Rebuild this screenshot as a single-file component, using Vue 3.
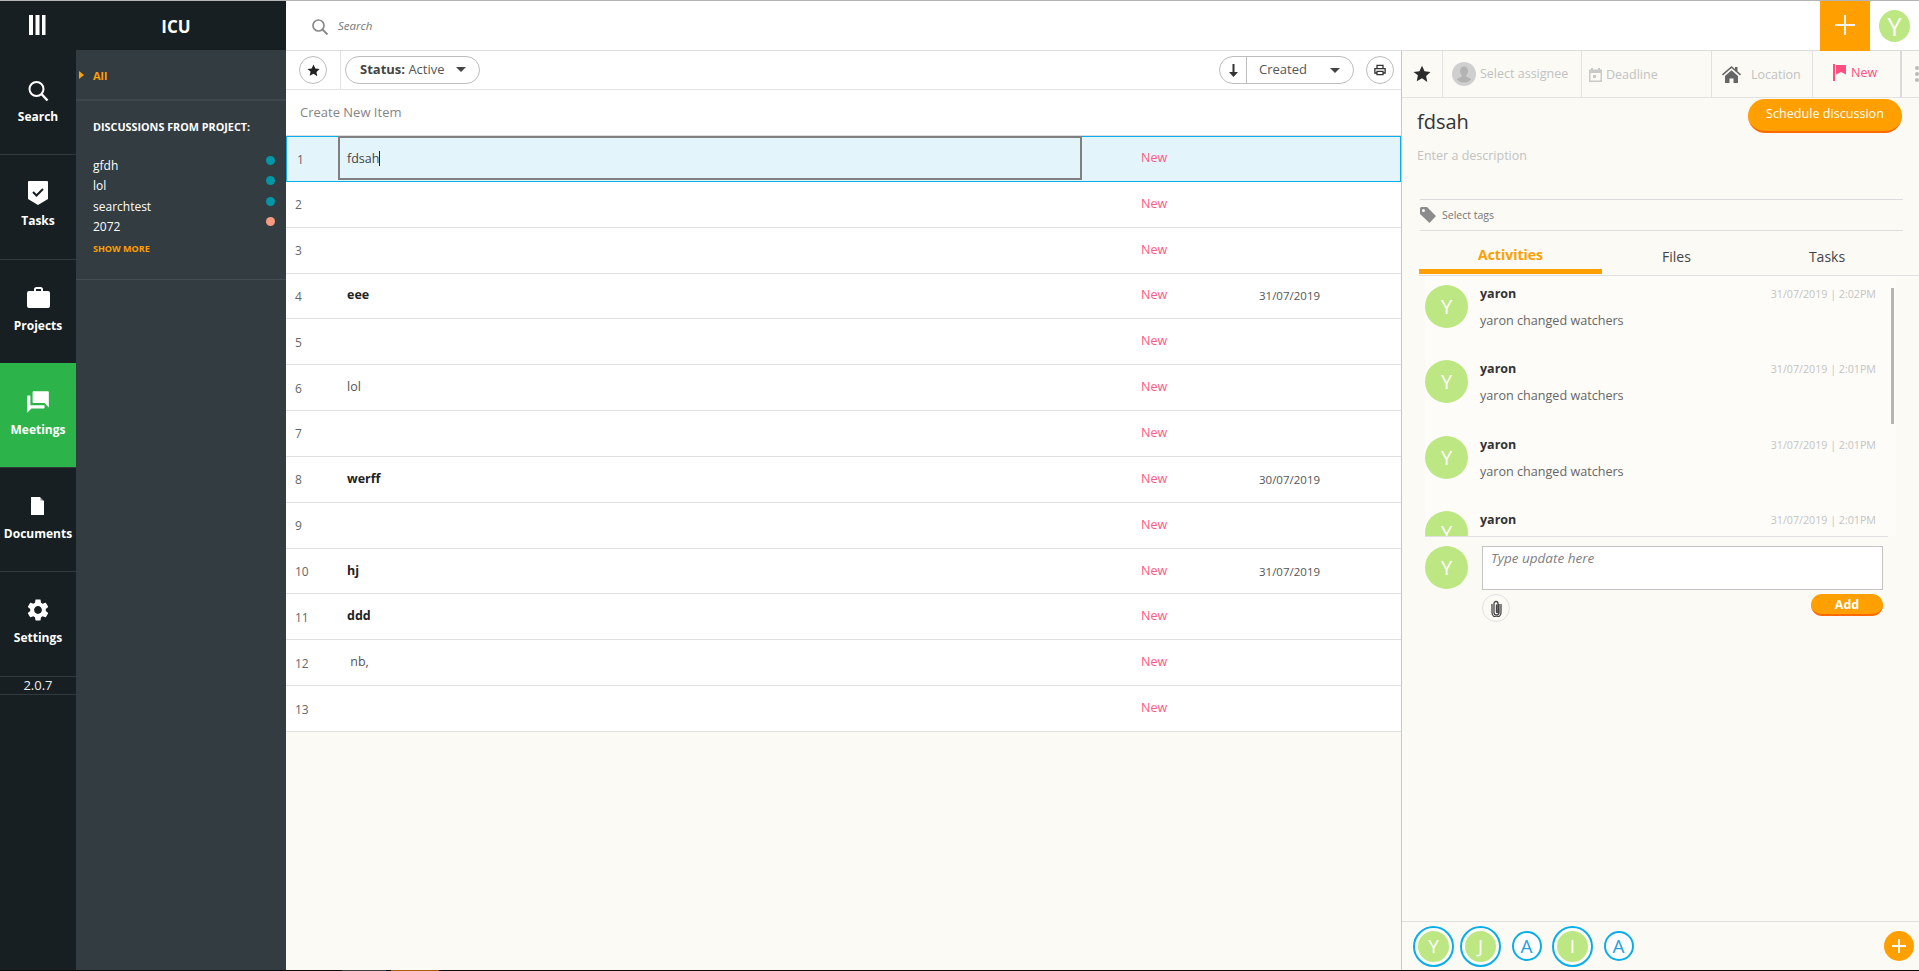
<script setup>
const nav = [
  { key: 'search', label: 'Search' },
  { key: 'tasks', label: 'Tasks' },
  { key: 'projects', label: 'Projects' },
  { key: 'meetings', label: 'Meetings', active: true },
  { key: 'documents', label: 'Documents' },
  { key: 'settings', label: 'Settings' }
]
const discussions = [
  { name: 'gfdh', tone: 'teal' },
  { name: 'lol', tone: 'teal' },
  { name: 'searchtest', tone: 'teal' },
  { name: '2072', tone: 'salmon' }
]
const rows = [
  { n: 1, selected: true },
  { n: 2 },
  { n: 3 },
  { n: 4, text: 'eee', bold: true, date: '31/07/2019' },
  { n: 5 },
  { n: 6, text: 'lol' },
  { n: 7 },
  { n: 8, text: 'werff', bold: true, date: '30/07/2019' },
  { n: 9 },
  { n: 10, text: 'hj', bold: true, date: '31/07/2019' },
  { n: 11, text: 'ddd', bold: true },
  { n: 12, text: '\u00a0nb,' },
  { n: 13 }
]
const activities = [
  { time: '2:02PM', msg: 'yaron changed watchers' },
  { time: '2:01PM', msg: 'yaron changed watchers' },
  { time: '2:01PM', msg: 'yaron changed watchers' },
  { time: '2:01PM' }
]
const watchers = [
  { l: 'Y', on: true }, { l: 'J', on: true }, { l: 'A' }, { l: 'I', on: true }, { l: 'A' }
]
</script>

<template>
  <div class="root">
    <div class="topline"></div>
    <div class="app">
      <aside class="side">
        <div class="brand">
          <div class="brand-icon">
            <svg width="18" height="20" viewBox="0 0 18 20"><path fill="#fff" d="M0 0h4v20H0zM6.500 0h4v20h-4zM13 0h3.500v20H13z"/></svg>
          </div>
          <div class="brand-name">ICU</div>
        </div>
        <div class="side-body">
          <nav class="nav">
            <div v-for="item in nav" :key="item.key" class="nav-item" :class="{ active: item.active }">
              <div class="nav-icon">
                <svg v-if="item.key === 'search'" width="22" height="24" viewBox="0 0 22 24"><circle cx="9.500" cy="10" r="7" fill="none" stroke="#fff" stroke-width="2"/><path d="M14.500 15l6 6.500" stroke="#fff" stroke-width="2.400"/></svg>
                <svg v-else-if="item.key === 'tasks'" width="20" height="24" viewBox="0 0 20 24"><path fill="#fff" d="M1 0h18a1 1 0 0 1 1 1v17l-10 6-10-6V1a1 1 0 0 1 1-1z"/><path d="M5 11l3.500 3.500L15 8" fill="none" stroke="#171f22" stroke-width="2"/></svg>
                <svg v-else-if="item.key === 'projects'" width="23" height="21" viewBox="0 0 23 21"><path fill="#fff" d="M7 4V2.500A2.500 2.500 0 0 1 9.500 0h4A2.500 2.500 0 0 1 16 2.500V4h5a2 2 0 0 1 2 2v13a2 2 0 0 1-2 2H2a2 2 0 0 1-2-2V6a2 2 0 0 1 2-2zm2 0h5V2H9z"/></svg>
                <svg v-else-if="item.key === 'meetings'" width="26" height="26" viewBox="0 0 24 24"><g transform="translate(24 0) scale(-1 1)"><path fill="#fff" d="M21 6h-2v9H6v2c0 .55.45 1 1 1h11l4 4V7c0-.55-.45-1-1-1zm-4 6V3c0-.55-.45-1-1-1H3c-.55 0-1 .45-1 1v14l4-4h10c.55 0 1-.45 1-1z"/></g></svg>
                <svg v-else-if="item.key === 'documents'" width="14" height="18" viewBox="0 0 14 18"><path fill="#fff" d="M0 0h9l4 4v14H0z"/><path fill="#171f22" d="M9.500 0v3.500H13z" opacity=".5"/></svg>
                <svg v-else width="26" height="26" viewBox="0 0 24 24"><path fill="#fff" d="M19.140 12.940c.04-.3.06-.61.06-.94 0-.32-.02-.64-.07-.94l2.030-1.580c.18-.14.23-.41.12-.61l-1.920-3.320c-.12-.22-.37-.29-.59-.22l-2.390.96c-.5-.38-1.030-.7-1.620-.94l-.36-2.540c-.04-.24-.24-.41-.48-.41h-3.840c-.24 0-.43.17-.47.41l-.36 2.540c-.59.24-1.130.57-1.620.94l-2.390-.96c-.22-.08-.47 0-.59.22L2.740 8.870c-.12.21-.08.47.12.61l2.030 1.580c-.05.3-.09.63-.09.94s.02.64.07.94l-2.030 1.580c-.18.14-.23.41-.12.61l1.920 3.320c.12.22.37.29.59.22l2.390-.96c.5.38 1.030.7 1.620.94l.36 2.540c.05.24.24.41.48.41h3.840c.24 0 .44-.17.47-.41l.36-2.540c.59-.24 1.130-.56 1.620-.94l2.390.96c.22.08.47 0 .59-.22l1.920-3.320c.12-.22.07-.47-.12-.61l-2.010-1.580zM12 15.600c-1.980 0-3.600-1.620-3.600-3.600s1.620-3.600 3.600-3.600 3.600 1.620 3.600 3.600-1.620 3.600-3.600 3.600z"/></svg>
              </div>
              <div class="nav-label">{{ item.label }}</div>
            </div>
            <div class="version">2.0.7</div>
          </nav>
          <div class="sec">
            <div class="sec-all"><span class="caret-right"></span><span>All</span></div>
            <div class="sec-group">
              <div class="sec-title">DISCUSSIONS FROM PROJECT:</div>
              <div v-for="d in discussions" :key="d.name" class="sec-row">
                <span>{{ d.name }}</span><i class="dot" :class="d.tone"></i>
              </div>
              <div class="show-more">SHOW MORE</div>
            </div>
          </div>
        </div>
      </aside>

      <div class="content">
        <header class="top">
          <svg class="top-search" width="18" height="18" viewBox="0 0 18 18"><circle cx="7.500" cy="7.500" r="5.500" fill="none" stroke="#8a8a8a" stroke-width="1.700"/><path d="M11.500 11.500l5 5" stroke="#8a8a8a" stroke-width="2"/></svg>
          <span class="top-text">Search</span>
          <div class="top-add"><svg width="20" height="20" viewBox="0 0 20 20"><path d="M10 0v20M0 10h20" stroke="#f2f2f2" stroke-width="2"/></svg></div>
          <div class="avatar top-avatar">Y</div>
        </header>

        <div class="panes">
          <main class="main">
            <div class="toolbar">
              <div class="circle-btn star-btn"><svg width="13" height="13" viewBox="0 0 24 24"><path fill="#222" d="M12 1l3.400 7.300 7.900 1-5.800 5.500 1.500 7.900L12 17.800l-7 3.900 1.500-7.900L.7 9.300l7.900-1z"/></svg></div>
              <div class="tool-sep"></div>
              <div class="pill status-pill"><b>Status:</b>&nbsp;Active<span class="caret-down"></span></div>
              <div class="tool-right">
                <div class="pill sort-pill">
                  <span class="sort-arrow"><svg width="9" height="13" viewBox="0 0 9 13"><path fill="#333" d="M3.500 0h2v8h3.500l-4.500 5L0 8h3.500z"/></svg></span>
                  <span class="sort-name">Created</span><span class="caret-down"></span>
                </div>
                <div class="circle-btn"><svg width="12" height="12" viewBox="0 0 14 13"><path fill="none" stroke="#333" stroke-width="1.500" d="M3.500 5V1h7v4M3.500 10H1V5h12v5h-2.500M3.500 8h7v4h-7z"/></svg></div>
              </div>
            </div>
            <div class="create">Create New Item</div>
            <div v-for="r in rows" :key="r.n" class="row" :class="{ selected: r.selected }">
              <div class="cell-n">{{ r.n }}</div>
              <div v-if="r.selected" class="cell-edit">fdsah<i class="cursor"></i></div>
              <div v-else class="cell-text" :class="{ bold: r.bold }">{{ r.text }}</div>
              <div class="cell-status">New</div>
              <div class="cell-date">{{ r.date }}</div>
            </div>
          </main>

          <section class="detail">
            <div class="d-tools">
              <div class="d-cell d-star"><svg width="18" height="18" viewBox="0 0 24 24"><path fill="#2b2b2b" d="M12 1l3.400 7.300 7.900 1-5.800 5.500 1.500 7.900L12 17.800l-7 3.900 1.500-7.900L.7 9.300l7.900-1z"/></svg></div>
              <div class="d-cell d-assignee">
                <svg width="24" height="24" viewBox="0 0 24 24"><circle cx="12" cy="12" r="12" fill="#cfcfcf"/><path fill="#b3b3b3" d="M12 4.500c2.500 0 4 2 4 4.500 0 1.800-.8 3.300-1.800 4.200v1.300l5 2.500a9 9 0 0 1-14.400 0l5-2.500v-1.300C8.800 12.300 8 10.800 8 9c0-2.500 1.500-4.500 4-4.500z"/></svg>
                <span>Select assignee</span>
              </div>
              <div class="d-cell d-deadline">
                <svg width="13" height="14" viewBox="0 0 13 14"><path fill="#c9c9c9" d="M2 0h2v1.500h5V0h2v1.500h2V14H0V1.500h2zM1.500 5v7.500h10V5zM4 7h3v3H4z"/></svg>
                <span>Deadline</span>
              </div>
              <div class="d-cell d-location">
                <svg width="19" height="17" viewBox="0 0 19 17"><path fill="#666" d="M9.500 0l3.500 3V1h2.500v4.200L19 8.300l-1 1.100-8.500-7.300L1 9.400 0 8.300zM3 10l6.500-5.800L16 10v7h-4.500v-4.500h-4V17H3z"/></svg>
                <span>Location</span>
              </div>
              <div class="d-cell d-new">
                <svg width="13" height="17" viewBox="0 0 13 17"><path fill="#ff4f81" d="M0 0h2v17H0zM3 1h10v9.500l-5-2.500-5 2.500z"/></svg>
                <span>New</span>
              </div>
              <div class="d-more"><i></i><i></i><i></i></div>
            </div>

            <div class="d-head">
              <div class="d-title">fdsah</div>
              <div class="btn-schedule">Schedule discussion</div>
            </div>
            <div class="d-desc">Enter a description</div>
            <div class="d-tags">
              <svg width="16" height="16" viewBox="0 0 16 16"><path fill="#8c8c8c" d="M0 1.500A1.500 1.500 0 0 1 1.500 0H7l9 9-6.500 7L0 7zM3.500 5a1.500 1.500 0 1 0 0-3 1.500 1.500 0 0 0 0 3z"/></svg>
              <span>Select tags</span>
            </div>
            <div class="tabs">
              <div class="tab active">Activities</div>
              <div class="tab">Files</div>
              <div class="tab">Tasks</div>
            </div>
            <div class="feed">
              <div v-for="(a, i) in activities" :key="i" class="feed-item">
                <div class="avatar feed-avatar">Y</div>
                <div class="feed-body">
                  <div class="feed-line"><b>yaron</b><span>31/07/2019 | {{ a.time }}</span></div>
                  <div v-if="a.msg" class="feed-msg">{{ a.msg }}</div>
                </div>
              </div>
              <div class="scrollbar"></div>
            </div>
            <div class="composer">
              <div class="avatar feed-avatar">Y</div>
              <div class="composer-main">
                <div class="composer-box">Type update here</div>
                <div class="composer-actions">
                  <div class="clip"><svg width="11" height="17" viewBox="0 0 11 17"><path fill="none" stroke="#444" stroke-width="1.300" d="M8 4v8.500a2.500 2.500 0 0 1-5 0V3.500a2 2 0 0 1 4 0V12a.8.8 0 0 1-1.500 0V4.500M10 4v8.500a4.500 4.500 0 0 1-9 0V4"/></svg></div>
                  <div class="btn-add">Add</div>
                </div>
              </div>
            </div>
            <div class="watchers">
              <div v-for="(w, i) in watchers" :key="i" class="watcher" :class="{ on: w.on }"><span>{{ w.l }}</span></div>
              <div class="watch-add"><svg width="14" height="14" viewBox="0 0 14 14"><path d="M7 0v14M0 7h14" stroke="#fff" stroke-width="1.800"/></svg></div>
            </div>
          </section>
        </div>
      </div>
    </div>
    <div class="baseline"><i class="seg-a"></i><i class="seg-b"></i></div>
  </div>
</template>

<style>
html, body { margin: 0; padding: 0; background: #fff; overflow: hidden; }
</style>

<style scoped>
* { box-sizing: border-box; }
.root { width: 1919px; height: 971px; display: flex; flex-direction: column; font-family: "Open Sans", "Liberation Sans", sans-serif; color: #444; overflow: hidden; }
.topline { height: 1px; background: #b4b4b4; flex: none; }
.baseline { height: 1px; background: #0a0a0a; flex: none; display: flex; }
.seg-a { width: 44px; margin-left: 342px; background: #3a3f42; }
.seg-b { width: 48px; margin-left: 5px; background: #a85c10; }
.app { flex: 1; display: flex; min-height: 0; }

.side { width: 286px; flex: none; display: flex; flex-direction: column; background: #171f22; }
.brand { height: 49px; flex: none; display: flex; align-items: center; }
.brand-icon { width: 76px; display: flex; justify-content: center; padding-bottom: 2px; }
.brand-name { width: 210px; text-align: center; color: #fff; font-weight: 700; font-size: 17px; padding-right: 10px; padding-top: 2px; }
.side-body { flex: 1; display: flex; min-height: 0; }
.nav { width: 76px; flex: none; }
.nav-item { height: 104.3px; border-top: 1px solid #323a3e; display: flex; flex-direction: column; align-items: center; padding-top: 25px; color: #fff; }
.nav-item:first-child { border-top: none; padding-top: 28px; }
.nav-item.active { background: #2cb44a; border-top-color: #2cb44a; }
.nav-icon { height: 26px; display: flex; align-items: center; justify-content: center; }
.nav-label { font-size: 12px; font-weight: 700; line-height: 17px; margin-top: 6px; }
.nav-item:first-child .nav-label { margin-top: 4px; }
.version { height: 19px; border-top: 1px solid #323a3e; border-bottom: 1px solid #323a3e; color: #eee; font-size: 13px; line-height: 16px; text-align: center; }
.sec { flex: 1; background: #323c41; color: #fff; }
.sec-all { height: 51px; display: flex; align-items: center; color: #ff9f00; font-weight: 700; font-size: 11px; padding: 1px 0 0 3px; border-bottom: 2px solid #3d474c; }
.caret-right { width: 0; height: 0; border-left: 5px solid #ff9f00; border-top: 4.500px solid transparent; border-bottom: 4.500px solid transparent; margin-right: 9px; }
.sec-group { padding: 18px 11px 24px 17px; border-bottom: 1px solid #434d52; height: 179px; }
.sec-title { font-size: 10.800px; font-weight: 700; line-height: 16px; margin-bottom: 21px; white-space: nowrap; }
.sec-row { height: 20.300px; display: flex; justify-content: space-between; font-size: 12px; line-height: 20px; }
.dot { width: 9px; height: 9px; border-radius: 50%; margin-top: 0; margin-right: 0; }
.dot.teal { background: #0097a7; }
.dot.salmon { background: #f79a7f; }
.show-more { font-size: 9px; font-weight: 700; color: #ff9f00; margin-top: 5px; line-height: 14px; }

.content { flex: 1; display: flex; flex-direction: column; min-width: 0; }
.top { height: 50px; flex: none; display: flex; align-items: center; border-bottom: 1px solid #dcdcdc; padding-left: 25px; background: #fff; }
.top-search { margin-top: 3px; }
.top-text { margin-left: 9px; font-size: 11.500px; font-style: italic; color: #777; }
.top-add { margin-left: auto; width: 50px; height: 50px; background: #ff9f00; display: flex; align-items: center; justify-content: center; padding-bottom: 1px; }
.avatar { border-radius: 50%; background: #bce783; color: #fff; display: flex; align-items: center; justify-content: center; flex: none; }
.top-avatar { width: 31px; height: 32px; margin: 0 9px; font-size: 25px; }
.panes { flex: 1; display: flex; min-height: 0; }

.main { width: 1115px; flex: none; background: #fbfaf5; }
.toolbar { height: 39px; background: #fff; border-bottom: 1px solid #e2e2e2; display: flex; align-items: center; padding-left: 13px; }
.circle-btn { width: 28px; height: 28px; border-radius: 50%; border: 1px solid #bdbdbd; display: flex; align-items: center; justify-content: center; background: #fff; flex: none; }
.tool-sep { width: 1px; height: 38px; background: #e2e2e2; margin: 0 4px 0 13px; }
.pill { height: 28px; border: 1px solid #bdbdbd; border-radius: 14px; display: flex; align-items: center; font-size: 13px; color: #555; padding-bottom: 2px; }
.pill b { color: #444; font-weight: 700; }
.status-pill { width: 135px; padding-left: 14px; }
.caret-down { width: 0; height: 0; border-top: 5px solid #444; border-left: 5.500px solid transparent; border-right: 5.500px solid transparent; margin-left: auto; margin-top: 1px; }
.status-pill .caret-down { margin-right: 13px; }
.tool-right { margin-left: auto; display: flex; align-items: center; gap: 12px; padding-right: 7px; }
.sort-pill { width: 135px; padding-bottom: 0; }
.sort-arrow { width: 27px; height: 100%; border-right: 1px solid #bdbdbd; display: flex; align-items: center; justify-content: center; }
.sort-name { margin-left: 12px; margin-top: -2px; }
.sort-pill .caret-down { margin-right: 13px; }
.create { height: 46px; background: #fff; display: flex; align-items: center; padding-left: 14px; font-size: 13px; color: #858585; padding-bottom: 3px; }
.row { height: 45.850px; background: #fff; border-bottom: 1px solid #e0e0e0; display: flex; align-items: center; font-size: 12px; }
.row.selected { background: #e3f4fb; border: 1px solid #08aeea; box-shadow: 0 -1px 0 #dedede; }
.cell-n { width: 52px; padding-left: 9px; color: #666; flex: none; padding-top: 1px; }
.row.selected .cell-n { padding-left: 10px; width: 51px; }
.cell-text { width: 744px; padding-left: 9px; flex: none; padding-bottom: 2px; font-size: 12.500px; color: #555; }
.cell-text.bold { font-weight: 700; color: #222; }
.cell-edit { width: 744px; height: 44px; flex: none; border: 2px solid #808080; padding-left: 7px; display: flex; align-items: center; font-size: 12.500px; color: #444; margin-top: -1px; }
.cursor { width: 1px; height: 15px; background: #222; }
.cell-status { width: 177px; padding-left: 59px; flex: none; color: #ff5a85; font-size: 12.500px; padding-bottom: 2px; white-space: nowrap; }
.cell-date { flex: 1; color: #555; font-size: 11.500px; white-space: nowrap; }

.detail { flex: 1; min-width: 0; background: #fbfaf5; border-left: 1px solid #c8c8c8; display: flex; flex-direction: column; }
.d-tools { height: 47px; flex: none; border-bottom: 1px solid #e2e2e2; display: flex; font-size: 12.500px; color: #c2c2c2; }
.d-cell { height: 46px; border-right: 1px solid #e2e2e2; display: flex; align-items: center; flex: none; white-space: nowrap; }
.d-star { width: 41px; justify-content: center; padding-left: 0; }
.d-assignee { width: 139px; padding-left: 9px; gap: 4px; }
.d-assignee span { margin-top: -2px; }
.d-deadline { width: 130px; padding-left: 7px; gap: 4px; padding-top: 1px; }
.d-location { width: 101px; padding-left: 10px; gap: 10px; }
.d-new { width: 89px; padding-left: 20px; gap: 5px; color: #ff4f81; padding-bottom: 4px; border-right: 2px solid #dadada; }
.d-more { display: flex; flex-direction: column; gap: 2px; padding: 15px 0 0 13px; }
.d-more i { width: 4px; height: 4px; border-radius: 50%; background: #bbb; }
.d-head { height: 59px; flex: none; display: flex; justify-content: space-between; padding: 0 17px 0 15px; }
.d-title { font-size: 20px; color: #333; line-height: 27px; margin-top: 10px; }
.btn-schedule { width: 154px; height: 34px; margin-top: 1px; border-radius: 17px; background: #ff9f00; border-bottom: 2px solid #ff6a00; color: #fff; font-size: 12.600px; display: flex; align-items: center; justify-content: center; padding-bottom: 3px; }
.d-desc { height: 41px; flex: none; padding-left: 15px; font-size: 12.500px; color: #c2c2c2; margin-top: -11px; margin-bottom: 4px; line-height: 19px; }
.d-tags { height: 32px; margin: 8px 16px 0 18px; border-top: 1px solid #dcdcdc; border-bottom: 1px solid #dcdcdc; display: flex; align-items: center; font-size: 10.500px; color: #777; gap: 6px; flex: none; }
.d-tags svg { margin-top: -1px; }
.tabs { display: grid; grid-template-columns: 183px 149px 152px; margin-left: 17px; height: 45px; flex: none; border-bottom: 1px solid #e0e0e0; }
.tab { text-align: center; font-size: 14px; color: #444; padding-top: 16px; }
.tab.active { color: #ff9f00; font-weight: 700; border-bottom: 5px solid #ff9f00; padding-top: 14px; height: 43px; }
.feed { height: 260px; margin-left: 23px; width: 471px; padding-right: 8px; overflow: hidden; position: relative; background: #fdfcf8; flex: none; }
.feed-item { height: 75.300px; padding-top: 9px; display: flex; }
.feed-avatar { width: 43px; height: 43px; font-size: 20px; }
.feed-body { flex: 1; padding-left: 12px; padding-right: 12px; }
.feed-line { display: flex; justify-content: space-between; align-items: baseline; line-height: 18px; }
.feed-line b { font-size: 12.500px; color: #333; font-weight: 700; }
.feed-line span { font-size: 10.700px; color: #c4c4c4; }
.feed-msg { font-size: 12.600px; color: #666; margin-top: 9px; line-height: 18px; }
.scrollbar { position: absolute; right: 2px; top: 12px; width: 3px; height: 136px; background: #b5b5b5; }
.composer { display: flex; margin-left: 23px; border-top: 1px solid #e0e0e0; width: 463px; padding-top: 9px; flex: none; }
.composer-main { margin-left: 14px; width: 401px; }
.composer-box { height: 44px; border: 1px solid #c4c4c4; background: #fff; padding: 1px 8px; font-size: 13.500px; font-style: italic; color: #808080; line-height: 20px; }
.composer-actions { display: flex; justify-content: space-between; align-items: flex-start; margin-top: 4px; }
.clip { width: 28px; height: 28px; border-radius: 50%; border: 1px solid #e0e0e0; display: flex; align-items: center; justify-content: center; }
.btn-add { width: 72px; height: 22px; border-radius: 11px; background: #ff9f00; border-bottom: 2px solid #ff6a00; color: #fff; font-weight: 700; font-size: 12.500px; display: flex; align-items: center; justify-content: center; }
.watchers { margin-top: auto; height: 49px; flex: none; border-top: 1px solid #e0e0e0; display: flex; align-items: center; padding: 0 5px 0 11px; }
.watcher { width: 30px; height: 30px; border-radius: 50%; border: 2px solid #08aeea; display: flex; align-items: center; justify-content: center; font-size: 19px; color: #2a9fe0; margin-right: 10.500px; flex: none; background: #fff; }
.watcher.on { width: 41px; height: 41px; padding: 3px; background: #fdfcf8; }
.watcher:first-child { margin-right: 6px; }
.watcher.on span { width: 100%; height: 100%; border-radius: 50%; background: #bce783; color: #fff; display: flex; align-items: center; justify-content: center; }
.watch-add { margin-left: auto; width: 30px; height: 30px; border-radius: 50%; background: #ff9f00; display: flex; align-items: center; justify-content: center; }
</style>
